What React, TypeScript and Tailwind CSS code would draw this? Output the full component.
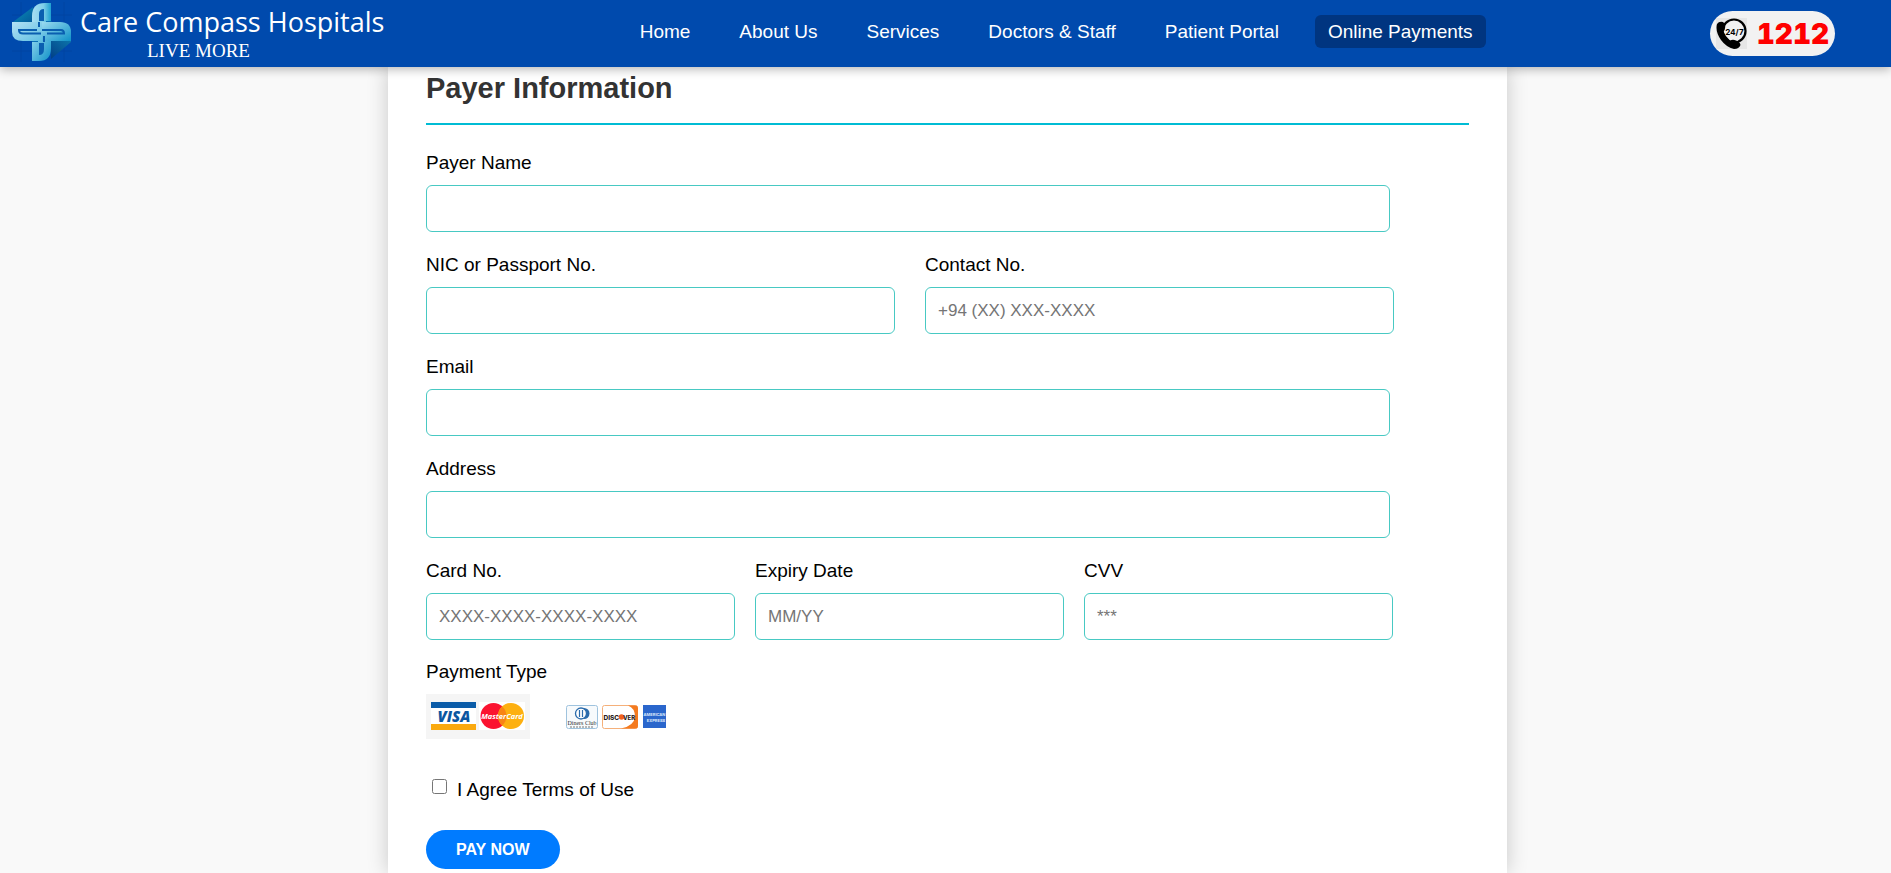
import React, { useId } from 'react';

const navItems = ['Home', 'About Us', 'Services', 'Doctors & Staff', 'Patient Portal', 'Online Payments'];

function Logo() {
  return (
    <svg viewBox="0 0 60 60" className="size-[60px] shrink-0" aria-hidden="true">
      <defs>
        <linearGradient id="lightArm" x1="0" y1="0" x2="1" y2="1">
          <stop offset="0" stopColor="#b4e2f4" />
          <stop offset="1" stopColor="#5fbfe2" />
        </linearGradient>
        <linearGradient id="topArm" x1="0" y1="0" x2="1" y2="0">
          <stop offset="0" stopColor="#a8dff2" />
          <stop offset="0.6" stopColor="#7fcfe9" />
          <stop offset="1" stopColor="#1da0d0" />
        </linearGradient>
        <linearGradient id="deepArm" x1="0" y1="0" x2="1" y2="1">
          <stop offset="0" stopColor="#9adaf0" />
          <stop offset="1" stopColor="#0f92c8" />
        </linearGradient>
        <linearGradient id="foldTop" x1="0" y1="0" x2="1" y2="1">
          <stop offset="0" stopColor="#0a8fb8" />
          <stop offset="1" stopColor="#03589a" />
        </linearGradient>
        <linearGradient id="foldBottom" x1="1" y1="0" x2="0" y2="1">
          <stop offset="0" stopColor="#0b74aa" />
          <stop offset="1" stopColor="#023f86" />
        </linearGradient>
      </defs>
      <path d="M9 0V60M52 0V60M0 13H60M0 49H60" stroke="#0045a2" strokeWidth="1" />
      <path d="M21 5 1 20V22H21Z" fill="url(#foldTop)" />
      <path d="M59 40 39 57V39H59Z" fill="url(#foldBottom)" />
      <path d="M20 30V14Q20 1 33 1H39V30Z" fill="url(#topArm)" />
      <path d="M39 30V46Q39 59 27 59H20V30Z" fill="url(#deepArm)" />
      <path d="M30 20H48Q59 20 59 30V39H30Z" fill="url(#deepArm)" />
      <path d="M30 20H0V30Q0 39 11 39H30Z" fill="url(#lightArm)" />
      <path d="M27 19V12Q27 7 32 7V19Z" fill="#0a5fb0" />
      <path d="M32 41V47Q32 53 27 53V41Z" fill="#0a5fb0" />
      <path d="M29 31.500H11Q7 31.500 7 28H25" fill="none" stroke="#0a5fb0" strokeWidth="2" />
      <path d="M30 28H49Q52 28 52 31.500H35" fill="none" stroke="#0a5fb0" strokeWidth="2" />
      <path d="M27 20V25M32 34V40" fill="none" stroke="#0a5fb0" strokeWidth="2" />
      <path d="M34 19.500H39.500M20 39.500H26" fill="none" stroke="#0a6fb4" strokeWidth="1" />
    </svg>
  );
}

function PhoneIcon() {
  return (
    <svg viewBox="0 0 31 31" className="size-[31px] bg-[#e6e6e6]" aria-hidden="true">
      <circle cx="18" cy="13" r="11.500" fill="#f2f2f2" stroke="#000" strokeWidth="2.200" />
      <path d="M1 6Q3 3 7 4Q10 6 9 10Q9 12 7.500 13.500Q9 18 14 22.500Q17 21 20 22.500Q24 24 24.500 27Q23 31 18 31Q10 29 5 22Q-1 13 1 6Z" fill="#000" />
      <text x="18.500" y="17" textAnchor="middle" fontFamily="Inter, sans-serif" fontWeight="700" fontSize="8">24/7</text>
    </svg>
  );
}

function VisaMastercard() {
  return (
    <svg viewBox="0 0 104 45" className="h-[45px] w-[104px]" role="img" aria-label="Visa and MasterCard">
      <rect width="104" height="45" fill="#f5f5f5" />
      <rect x="5" y="8" width="45" height="28" fill="#fff" />
      <rect x="5" y="8" width="45" height="6" fill="#0b5ca8" />
      <rect x="5" y="30" width="45" height="6" fill="#faa90f" />
      <text x="28" y="27.500" textAnchor="middle" fontFamily="Open Sans, sans-serif" fontStyle="italic" fontWeight="800" fontSize="15" fill="#0b56a0">VISA</text>
      <rect x="53" y="8" width="46" height="28" fill="#fff" />
      <circle cx="67.500" cy="22" r="13" fill="#fb1330" />
      <circle cx="85" cy="22" r="13" fill="#fdb010" />
      <path d="M76.250 12.400A13 13 0 0 1 76.250 31.600A13 13 0 0 1 76.250 12.400Z" fill="#f98414" />
      <text x="76" y="25" textAnchor="middle" fontFamily="Open Sans, sans-serif" fontStyle="italic" fontWeight="700" fontSize="7.500" fill="#fff">MasterCard</text>
    </svg>
  );
}

function OtherCards() {
  return (
    <svg viewBox="0 0 100 45" className="h-[45px] w-[100px]" role="img" aria-label="Diners Club, Discover and American Express">
      <rect x="0.500" y="11.500" width="31" height="23" rx="2" fill="#f7fafc" stroke="#9fc3de" />
      <circle cx="18" cy="19.500" r="5.500" fill="#2c6cac" />
      <circle cx="15" cy="19.500" r="5.500" fill="#fff" stroke="#2c6cac" strokeWidth="1.300" />
      <path d="M13.500 16V23M16.500 16V23" stroke="#2c6cac" strokeWidth="1.200" />
      <text x="16" y="31" textAnchor="middle" fontFamily="Liberation Serif, serif" fontSize="6" fill="#333">Diners Club</text>
      <path d="M4 33H28" stroke="#777" strokeWidth="1" strokeDasharray="2 1" />
      <rect x="36.500" y="11.500" width="35" height="23" rx="2" fill="#fff" stroke="#f5b07a" />
      <path d="M62 11.500H70Q72 12 72 14V32Q72 34 70 34.500H55Q68 32 69 23Q69 14 62 11.500Z" fill="#f47a1f" />
      <text x="37.500" y="25.500" fontFamily="Inter, sans-serif" fontWeight="800" fontSize="6.500" fill="#2a2020">DISC</text>
      <circle cx="55.500" cy="23" r="2.800" fill="#f0601c" />
      <text x="57" y="25.500" fontFamily="Inter, sans-serif" fontWeight="800" fontSize="6" fill="#2a2020">VER</text>
      <rect x="77" y="11" width="23" height="23" fill="#2a66cc" />
      <text x="88.500" y="22" textAnchor="middle" fontFamily="Inter, sans-serif" fontWeight="700" fontSize="4" fill="#dce8fa">AMERICAN</text>
      <text x="90" y="28" textAnchor="middle" fontFamily="Inter, sans-serif" fontWeight="700" fontSize="4" fill="#dce8fa">EXPRESS</text>
    </svg>
  );
}

function Field({ label, placeholder, type = 'text' }: { label: string; placeholder?: string; type?: string }) {
  const id = useId();
  return (
    <div className="flex flex-col gap-[11px]">
      <label htmlFor={id} className="leading-[22px]">{label}</label>
      <input
        id={id}
        type={type}
        placeholder={placeholder}
        className="h-[47px] w-full rounded-md border border-[#48c9c3] bg-white px-3 text-[17px] outline-none placeholder:text-[#757575]"
      />
    </div>
  );
}

export default function App() {
  return (
    <div className="flex min-h-screen flex-col bg-[#f9f9f9] font-['Liberation_Sans',Arial,sans-serif] text-[19px] text-black">
      <header className="sticky top-0 z-10 flex h-[67px] items-center justify-between bg-[#004aad] pr-14 pl-3 text-white shadow-[0_2px_10px_rgba(0,0,0,0.3)]">
        <a href="#home" className="flex items-center gap-2 pr-[18px] pb-[3px]">
          <Logo />
          <span className="flex flex-col">
            <span className="font-['Open_Sans','Noto_Sans',sans-serif] text-[27px] leading-[38px]">Care Compass Hospitals</span>
            <span className="pl-[67px] font-['Liberation_Serif',serif] text-[19px] leading-[20px]">LIVE MORE</span>
          </span>
        </a>
        <nav className="flex gap-[23px] pb-1">
          {navItems.map((item) => (
            <a
              key={item}
              href="#"
              className={`rounded-md px-[13px] leading-[33px] ${item === 'Online Payments' ? 'bg-[#003580]' : ''}`}
            >
              {item}
            </a>
          ))}
        </nav>
        <a href="tel:1212" className="flex h-[45px] items-center gap-2.5 rounded-full bg-[#f2f2f2] pr-1.5 pl-1.5 font-['Inter',sans-serif] text-[28px] font-black text-[#ff0000] tabular-nums">
          <PhoneIcon />
          1212
        </a>
      </header>

      <main className="mr-[384px] ml-[388px] flex-1 bg-white px-[38px] pt-[3px] shadow-[0_0_20px_rgba(0,0,0,0.2)]">
        <h1 className="border-b-2 border-[#00bcd4] pb-[17px] text-[29px] leading-9 font-bold text-[#333]">Payer Information</h1>
        <form className="flex flex-col pt-[27px]" onSubmit={(e) => e.preventDefault()}>
          <div className="flex flex-col gap-[22px]">
            <div className="max-w-[964px]"><Field label="Payer Name" /></div>
            <div className="grid max-w-[968px] grid-cols-2 gap-[30px]">
              <Field label="NIC or Passport No." />
              <Field label="Contact No." placeholder="+94 (XX) XXX-XXXX" type="tel" />
            </div>
            <div className="max-w-[964px]"><Field label="Email" type="email" /></div>
            <div className="max-w-[964px]"><Field label="Address" /></div>
            <div className="grid max-w-[967px] grid-cols-3 gap-5">
              <Field label="Card No." placeholder="XXXX-XXXX-XXXX-XXXX" />
              <Field label="Expiry Date" placeholder="MM/YY" />
              <Field label="CVV" placeholder="***" type="password" />
            </div>
          </div>
          <fieldset className="pt-[21px]">
            <legend className="float-left w-full leading-[22px]">Payment Type</legend>
            <div className="clear-both flex gap-9 pt-[11px]">
              <VisaMastercard />
              <OtherCards />
            </div>
          </fieldset>
          <label className="flex items-start gap-2.5 pt-10 pl-1.5 leading-[22px]">
            <input type="checkbox" className="size-[15px]" />
            I Agree Terms of Use
          </label>
          <button type="submit" className="mt-[29px] h-[39px] self-start rounded-full bg-[#007bff] px-[30px] text-base font-bold text-white">
            PAY NOW
          </button>
        </form>
      </main>
    </div>
  );
}
